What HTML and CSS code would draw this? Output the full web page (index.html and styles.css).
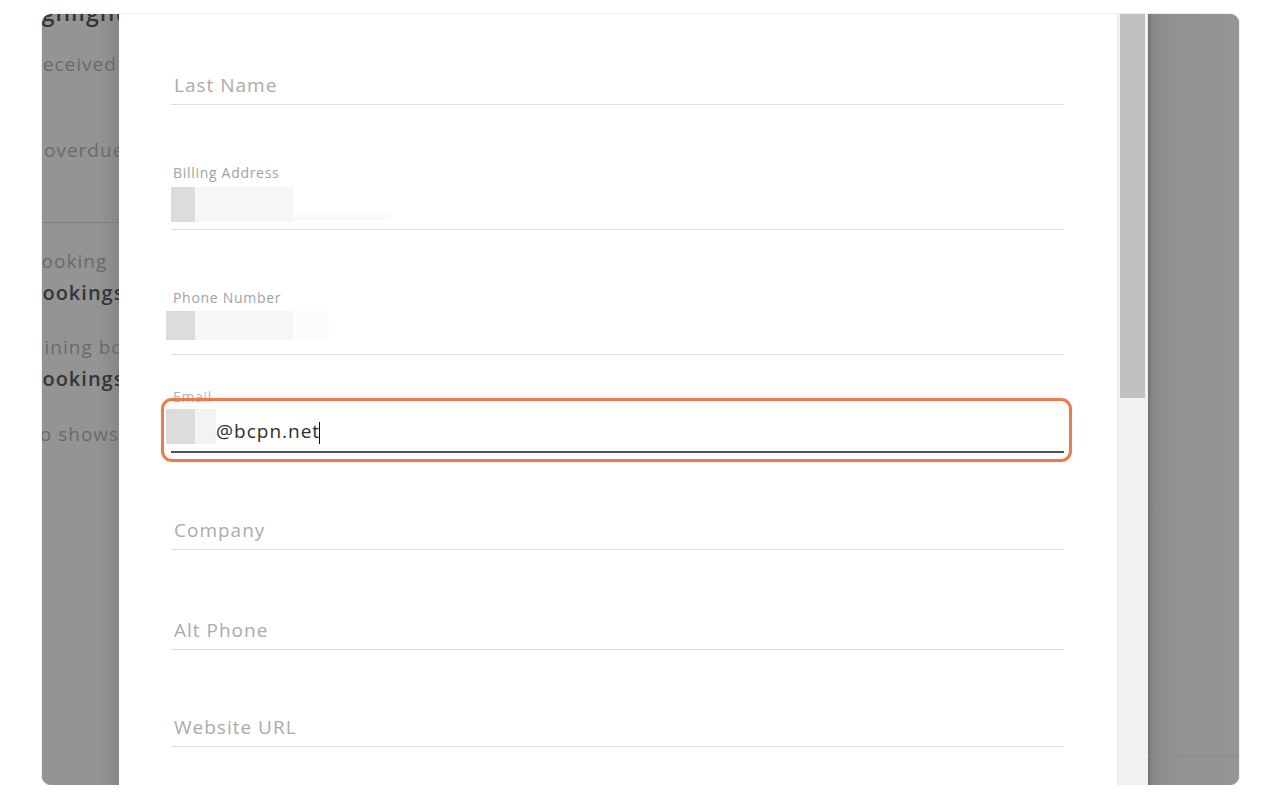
FILE: index.html
```html
<!DOCTYPE html>
<html>
<head>
<meta charset="utf-8">
<link rel="stylesheet" href="styles.css">
</head>
<body>
<div class="frame">
  <div class="strip">
    <div class="ln l1 strong"><span class="cut c1">Highlights</span></div>
    <div class="ln l2"><span class="cut c2">received</span></div>
    <div class="ln l3"><span class="cut c3">overdue</span></div>
    <div class="rule"></div>
    <div class="ln l5"><span class="cut c4">booking</span></div>
    <div class="ln l6 strong"><span class="cut c4">bookings</span></div>
    <div class="ln l7"><span class="cut c5">Remaining bookings</span></div>
    <div class="ln l8 strong"><span class="cut c4">bookings</span></div>
    <div class="ln l9"><span class="cut c6">Also shows</span></div>
  </div>
  <div class="modal">
    <div class="field f1 plain"><div class="input"><span class="ph">Last Name</span></div></div>
    <div class="field f2 labeled">
      <div class="label">Billing Address</div>
      <div class="input"><span class="red r1"></span><span class="red r2"></span><span class="red r3"></span></div>
    </div>
    <div class="field f3 labeled">
      <div class="label">Phone Number</div>
      <div class="input shift"><span class="red r1 tall"></span><span class="red r2 tall"></span><span class="red r3 pink"></span></div>
    </div>
    <div class="field f4 email">
      <div class="label elabel">Email</div>
      <div class="input shift"><span class="red r1 etall"></span><span class="red r4 etall"></span><span class="val">@bcpn.net</span><span class="caret"></span></div>
      <div class="focus"></div>
    </div>
    <div class="field f5 plain"><div class="input"><span class="ph">Company</span></div></div>
    <div class="field f6 plain"><div class="input"><span class="ph">Alt Phone</span></div></div>
    <div class="field f7 plain"><div class="input"><span class="ph">Website URL</span></div></div>
  </div>
  <div class="scroll"><div class="thumb"></div></div>
  <div class="rightside"><div class="rline"></div></div>
</div>
</body>
</html>
```
FILE: styles.css
```css
html, body {
  margin: 0;
  padding: 0;
  background: #ffffff;
}
body {
  font-family: "Open Sans", "Noto Sans", sans-serif;
}
.frame {
  margin: 14px 0 0 42px;
  width: 1197px;
  height: 771px;
  border-radius: 9px;
  overflow: hidden;
  display: flex;
  background: #939393;
  box-shadow: 0 0 0 1px #efefef;
}
.strip {
  width: 77px;
  flex: none;
  overflow: hidden;
  display: flex;
  flex-direction: column;
  background: linear-gradient(to right, #949494 0%, #949494 70%, #8c8c8c 92%, #858585 100%);
  font-family: "Open Sans", "Noto Sans", sans-serif;
  font-size: 19px;
  letter-spacing: 1px;
  color: #6a6a6a;
  white-space: nowrap;
}
.ln {
  line-height: 24px;
  height: 24px;
}
.strong {
  color: #34343a;
  font-weight: 600;
  font-size: 20px;
}
.l1 { margin-top: -14px; font-size: 23px; }
.l2 { margin-top: 28px; }
.l3 { margin-top: 62px; }
.rule {
  margin-top: 60px;
  height: 1px;
  background: #7c7c7c;
  flex: none;
}
.l5 { margin-top: 26px; }
.l6 { margin-top: 8px; }
.l7 { margin-top: 30px; }
.l8 { margin-top: 8px; }
.l9 { margin-top: 31px; }
.cut { display: inline-block; }
.c1 { margin-left: -26px; }
.c2 { margin-left: -8px; }
.c3 { margin-left: 2px; }
.c4 { margin-left: -13px; }
.c5 { margin-left: -52px; }
.c6 { margin-left: -31px; }

.modal {
  width: 998px;
  flex: none;
  background: #ffffff;
  padding-left: 52px;
  box-sizing: border-box;
  display: flex;
  flex-direction: column;
}
.field {
  width: 893px;
  display: flex;
  flex-direction: column;
  justify-content: flex-end;
  border-bottom: 1px solid #dedede;
  box-sizing: border-box;
  flex: none;
}
.f1 { height: 91px; }
.f2 { height: 125px; }
.f3 { height: 125px; }
.f4 { height: 98px; position: relative; border-bottom: 2px solid #4b5068; }
.f5 { height: 97px; }
.f6 { height: 100px; }
.f7 { height: 97px; }
.plain .input {
  height: 38px;
  display: flex;
  align-items: center;
  padding-left: 3px;
}
.ph {
  font-size: 19px;
  letter-spacing: 1px;
  color: #ababab;
}
.label {
  font-size: 14px;
  letter-spacing: 0.7px;
  color: #a2a2a2;
  line-height: 16px;
  padding-left: 2px;
  margin-bottom: 3px;
}
.labeled .input {
  height: 45px;
  display: flex;
  align-items: flex-start;
  padding-top: 3px;
  box-sizing: border-box;
}
.red {
  display: block;
  height: 35px;
}
.r1 { width: 24px; background: #dcdcdc; }
.r2 { width: 98px; background: #f6f6f6; }
.r3 { width: 97px; height: 33px; background: linear-gradient(to bottom, #ffffff 70%, #f8f8f8 100%); }
.pink { background: #fdfbfb; height: 29px; width: 34px; }
.shift { margin-left: -5px; }
.tall { height: 29px; }
.r1.tall { width: 29px; }
.labeled .shift { padding-top: 2px; }
.email .label {
  color: #b4b4b4;
  margin-bottom: 4px;
  padding-left: 2px;
}
.email .input {
  height: 42px;
  display: flex;
  align-items: flex-start;
  position: relative;
}
.etall { height: 35px; }
.r1.etall { width: 29px; }
.r4 { width: 21px; background: #f3f3f3; }
.val {
  font-size: 19px;
  letter-spacing: 1px;
  color: #2e2e2e;
  line-height: 22px;
  margin-top: 11px;
}
.caret {
  display: block;
  width: 1px;
  height: 22px;
  background: #111;
  margin-top: 13px;
  margin-left: -1px;
}
.focus {
  position: absolute;
  left: -10px;
  right: -8px;
  top: 43px;
  bottom: -11px;
  border: 3px solid #ea7b4f;
  border-radius: 11px;
  box-shadow: 0 0 1px rgba(234, 123, 79, 0.6);
}
.scroll {
  width: 31px;
  flex: none;
  background: #f1f1f1;
  box-shadow: inset 1px 0 0 #e9e9e9;
}
.thumb {
  margin: 0 3px 0 3px;
  height: 384px;
  background: #c1c1c1;
}
.rightside {
  flex: 1;
  background: linear-gradient(to right, #6f6f6f 0px, #7e7e7e 2px, #8a8a8a 6px, #939393 30px, #959595 100%);
  display: flex;
  flex-direction: column;
}
.rline {
  margin-top: 741px;
  height: 1px;
  background: #8a8a8a;
}
```
